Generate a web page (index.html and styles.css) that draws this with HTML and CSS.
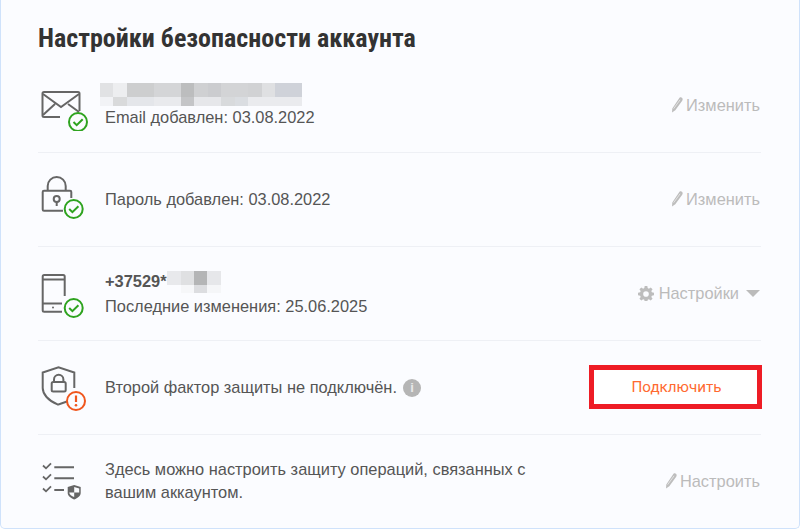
FILE: index.html
```html
<!DOCTYPE html>
<html lang="ru">
<head>
<meta charset="utf-8">
<title>Настройки безопасности аккаунта</title>
<link rel="stylesheet" href="styles.css">
</head>
<body>
<main class="card">
  <h1 class="title">Настройки безопасности аккаунта</h1>
  <section class="row">
    <svg class="icon" viewBox="0 0 52 52" fill="none" stroke="#666" stroke-width="2">
      <path d="M22 38H6a1.500 1.500 0 0 1-1.500-1.500V14.500A1.500 1.500 0 0 1 6 13h34a1.500 1.500 0 0 1 1.500 1.500V32"/>
      <path d="M5 15l18 13 18-13M5 36l12-11M41 33l-11-8"/>
      <circle class="ok" cx="40" cy="43" r="9"/><path class="ok" d="M35.500 43l3.200 3.200 6-6"/>
    </svg>
    <div class="info">
      <svg class="mask" width="202" height="23" viewBox="0 0 202 23">
        <rect width="13" height="14" x="0" fill="#e1e2e4"/><rect width="14" height="14" x="13" fill="#edeef0"/><rect width="27" height="14" x="27" fill="#cdcecf"/><rect width="27" height="14" x="54" fill="#d4d5d7"/><rect width="13" height="14" x="81" fill="#bcbdbe"/><rect width="14" height="14" x="94" fill="#cfd0d2"/><rect width="13" height="14" x="108" fill="#cbcccf"/><rect width="27" height="14" x="121" fill="#d3d4d6"/><rect width="14" height="14" x="148" fill="#d1d2d4"/><rect width="13" height="14" x="162" fill="#dfe0e2"/><rect width="27" height="14" x="175" fill="#cfd2d9"/>
        <rect width="13" height="9" y="14" x="0" fill="#f2f3f6"/><rect width="14" height="9" y="14" x="13" fill="#d9dadb"/><rect width="27" height="9" y="14" x="27" fill="#e4e6ea"/><rect width="27" height="9" y="14" x="54" fill="#e9eaed"/><rect width="13" height="9" y="14" x="81" fill="#c4c5c7"/><rect width="27" height="9" y="14" x="94" fill="#e6e7ea"/><rect width="14" height="9" y="14" x="121" fill="#d8dadc"/><rect width="13" height="9" y="14" x="135" fill="#dadde1"/><rect width="54" height="9" y="14" x="148" fill="#eaebee"/>
      </svg>
      <p class="line">Email добавлен: 03.08.2022</p>
    </div>
    <a class="action"><svg class="pen" viewBox="0 0 12 16"><path d="M8.500.8c.9-.7 2-.5 2.700.3.700.8.600 1.900 0 2.700L4.300 13.200 1 15.400l.3-4z" fill="#bdbdbd"/><path d="M2.600 11.700l6.500-8.900" stroke="#e6e6e6" stroke-width=".9" fill="none"/></svg>Изменить</a>
  </section>
  <section class="row">
    <svg class="icon" viewBox="0 0 52 52" fill="none" stroke="#666" stroke-width="2">
      <path d="M25 37.700H6a1.300 1.300 0 0 1-1.300-1.300V19a1.300 1.300 0 0 1 1.300-1.300h26a1.300 1.300 0 0 1 1.300 1.300v6"/>
      <path d="M9.700 17.700V13a9 9 0 0 1 18 0v4.700"/>
      <circle cx="18.700" cy="26" r="3"/><path d="M18.700 29v4"/>
      <circle class="ok" cx="35.700" cy="36" r="9"/><path class="ok" d="M31.200 36l3.200 3.200 6-6"/>
    </svg>
    <div class="info"><p class="line">Пароль добавлен: 03.08.2022</p></div>
    <a class="action"><svg class="pen" viewBox="0 0 12 16"><path d="M8.500.8c.9-.7 2-.5 2.700.3.700.8.600 1.900 0 2.700L4.300 13.200 1 15.400l.3-4z" fill="#bdbdbd"/><path d="M2.600 11.700l6.500-8.900" stroke="#e6e6e6" stroke-width=".9" fill="none"/></svg>Изменить</a>
  </section>
  <section class="row">
    <svg class="icon" viewBox="0 0 52 52" fill="none" stroke="#666" stroke-width="2">
      <path d="M26.700 29V9.500A1.500 1.500 0 0 0 25.200 8H6.200a1.500 1.500 0 0 0-1.500 1.500v33.700a1.500 1.500 0 0 0 1.500 1.500H24"/>
      <path d="M4.700 12.500h22M4.700 36.500H24"/>
      <circle cx="15" cy="40.500" r="1" fill="#666" stroke="none"/>
      <circle class="ok" cx="35.700" cy="41" r="9"/><path class="ok" d="M31.200 41l3.200 3.200 6-6"/>
    </svg>
    <div class="info">
      <div class="phone"><strong class="number">+37529*</strong>
        <svg class="mask-phone" width="54" height="22" viewBox="0 0 54 22">
          <rect width="14" height="14" fill="#e8e9ec"/><rect x="14" width="13" height="14" fill="#dfe0e2"/><rect x="27" width="13" height="14" fill="#b4b5b6"/><rect x="40" width="14" height="14" fill="#e6e7ea"/>
          <rect x="14" y="14" width="13" height="8" fill="#f6f7f9"/><rect x="27" y="14" width="13" height="8" fill="#dcdde0"/><rect x="40" y="14" width="14" height="8" fill="#f5f6f8"/>
        </svg>
      </div>
      <p class="line">Последние изменения: 25.06.2025</p>
    </div>
    <a class="action"><svg class="gear" viewBox="-0.500 0 17 16"><path fill="#bdbdbd" fill-rule="evenodd" d="M6.600 0h2.800l.4 2.200 1.300.6L13 1.500l2 2-1.300 1.900.5 1.300 2.300.4v2.800l-2.300.4-.5 1.300 1.300 1.900-2 2-1.900-1.300-1.300.5-.4 2.300H6.600l-.4-2.300-1.300-.5L3 15.500l-2-2 1.300-1.900-.5-1.300L-.5 9.900V7.100l2.300-.4.5-1.300L1 3.500l2-2 1.900 1.300 1.300-.6zM8 5.500a3 3 0 1 0 0 6 3 3 0 0 0 0-6z"/></svg>Настройки<span class="caret"></span></a>
  </section>
  <section class="row">
    <svg class="icon" viewBox="0 0 52 52" fill="none" stroke="#666" stroke-width="2">
      <path d="M29 40.500l-8.500 3-1-.1C10 39.500 4.700 33 4.700 27V11.500L20.500 6.300l15.800 5.200V27"/>
      <rect x="13.700" y="21" width="14" height="9.500" rx="1.500"/>
      <path d="M16 21v-2.500a4.700 4.700 0 0 1 9.400 0V21"/>
      <circle cx="38" cy="40" r="9" stroke="#f0561d"/>
      <path d="M38 34.500v6.500" stroke="#f0561d" stroke-width="2.200"/>
      <circle cx="38" cy="44.300" r="1.300" fill="#f0561d" stroke="none"/>
    </svg>
    <div class="info info-factor">
      <p class="line">Второй фактор защиты не подключён.<span class="hint">i</span></p>
    </div>
    <a class="connect">Подключить</a>
  </section>
  <section class="row row-last">
    <svg class="icon" viewBox="0 0 52 52" fill="none" stroke="#666" stroke-width="2">
      <path d="M5 10.500l3 2.800 5-5M5 21.500l3 2.800 5-5M5 33.500l3 2.800 5-5" stroke-width="1.800"/>
      <path d="M16.300 12.300H36M16.300 23.300H36M16.300 35H26"/>
      <path d="M36.200 30l6.500 2v6c0 3-3 5-6.500 6.500-3.500-1.500-6.500-3.500-6.500-6.500v-6z" fill="#666" stroke="none"/>
      <path d="M36.200 32v5.500h5V33.500zM36.200 37.500h-5c.3 2 2.500 3.500 5 4.600z" fill="#fbfcff" stroke="none"/>
    </svg>
    <div class="info info-raised"><p class="line line-tight">Здесь можно настроить защиту операций, связанных с<br>вашим аккаунтом.</p></div>
    <a class="action"><svg class="pen" viewBox="0 0 12 16"><path d="M8.500.8c.9-.7 2-.5 2.700.3.700.8.600 1.900 0 2.700L4.300 13.200 1 15.400l.3-4z" fill="#bdbdbd"/><path d="M2.600 11.700l6.500-8.900" stroke="#e6e6e6" stroke-width=".9" fill="none"/></svg>Настроить</a>
  </section>
</main>
</body>
</html>
```
FILE: styles.css
```css
* { box-sizing: border-box; }
html, body { margin: 0; height: 100%; background: #fff; }
body { overflow: hidden; font-family: "Liberation Sans", Arial, sans-serif; }
.card {
  width: 800px;
  height: 529px;
  padding: 0 38px 0 37px;
  background: #fbfcff;
  border: 1px solid #cfe2fb;
  border-top: 0;
  border-radius: 0 0 5px 5px;
}
.title {
  margin: 0;
  height: 59px;
  padding-top: 22px;
  font: 700 26px/32px Roboto, sans-serif;
  font-stretch: condensed;
  color: #333;
  white-space: nowrap;
}
.row {
  display: flex;
  align-items: center;
  height: 94px;
  border-bottom: 1px solid #eef0f5;
}
.row-last { border-bottom-color: transparent; }
.icon { flex: none; width: 52px; height: 52px; margin: -1px 15px 0 0; }
.ok { stroke: #2ea31f; }
.info { flex: 1; min-width: 0; color: #555; font-size: 16.4px; line-height: 25px; }
.info-raised { margin-bottom: 2px; }
.info-factor { margin-bottom: 1px; }
.line { margin: 0; }
.line-tight { line-height: 23px; }
.mask { display: block; margin: 2px 0 -1px -5px; }
.phone { display: flex; align-items: flex-start; height: 25px; line-height: 25px; }
.number { font-weight: 700; color: #555; }
.mask-phone { margin-top: 2px; }
.hint {
  display: inline-flex;
  align-items: center;
  justify-content: center;
  width: 18px;
  height: 18px;
  margin-left: 6px;
  border-radius: 50%;
  background: #b5b5b5;
  color: #e8e8e8;
  font-size: 13px;
  font-weight: 700;
  line-height: 18px;
  vertical-align: 1px;
}
.action {
  display: flex;
  align-items: center;
  margin: 0 1px 1px 0;
  color: #bbb;
  font-size: 16.4px;
  line-height: 20px;
}
.pen { width: 12px; height: 16px; margin-right: 3px; }
.gear { width: 16px; height: 15px; margin-right: 5px; }
.caret {
  width: 0;
  height: 0;
  margin: 0 0 0 7px;
  border-left: 7px solid transparent;
  border-right: 7px solid transparent;
  border-top: 7px solid #bbb;
}
.connect {
  display: flex;
  align-items: center;
  justify-content: center;
  flex: none;
  width: 173px;
  height: 44px;
  margin: 0 -1px 2px 0;
  padding-left: 2px;
  background: #fff;
  border: 5px solid #ee1c25;
  color: #ff6a30;
  font: 15.2px/20px Roboto, sans-serif;
}
```
